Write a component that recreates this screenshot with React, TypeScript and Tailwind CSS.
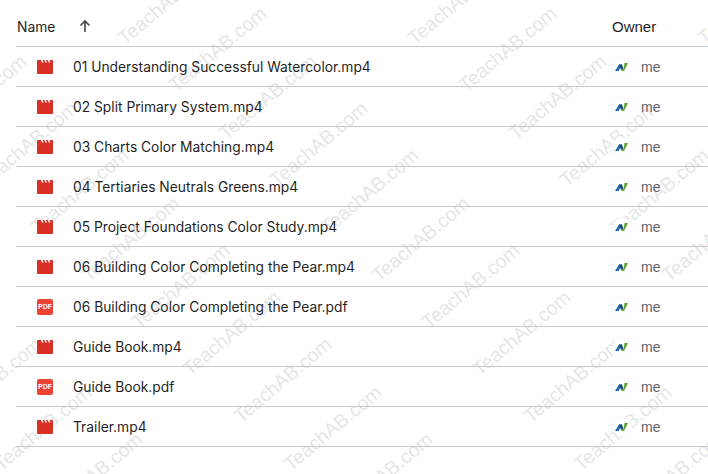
const files = [
  ["01 Understanding Successful Watercolor.mp4", "v"],
  ["02 Split Primary System.mp4", "v"],
  ["03 Charts Color Matching.mp4", "v"],
  ["04 Tertiaries Neutrals Greens.mp4", "v"],
  ["05 Project Foundations Color Study.mp4", "v"],
  ["06 Building Color Completing the Pear.mp4", "v"],
  ["06 Building Color Completing the Pear.pdf", "p"],
  ["Guide Book.mp4", "v"],
  ["Guide Book.pdf", "p"],
  ["Trailer.mp4", "v"],
];

function VideoIcon() {
  return (
    <svg width="16" height="14" viewBox="0 0 16 14" className="block">
      <path d="M0 1a1 1 0 0 1 1-1h14a1 1 0 0 1 1 1v12a1 1 0 0 1-1 1H1a1 1 0 0 1-1-1z" fill="#d93025" />
      <path d="M4 0h1.6l1 2.6H5zM7.4 0H9l1 2.6H8.4zM10.8 0h1.6l1 2.6h-1.6z" fill="#ffffff" />
    </svg>
  );
}

function PdfIcon() {
  return (
    <div className="w-4 h-4 rounded-[2px] bg-[#ea4335] flex items-center justify-center">
      <span className="text-white text-[7px] leading-none font-bold font-['Liberation_Sans',sans-serif]">PDF</span>
    </div>
  );
}

function Avatar() {
  return (
    <div className="w-5 h-5 rounded-full bg-white border border-[#f6f6f6] flex items-center justify-center">
      <svg width="13" height="8" viewBox="0 0 13 8" className="mr-px">
        <path d="M0 8 L4 1.5 L7 1.5 L3.5 8z" fill="#1a6fb0" />
        <path d="M4 1.5 L7 1.5 L8.5 6 L6 7z" fill="#17507a" />
        <path d="M6 7 L8.5 6 L9.5 0 L13 0 L9 8 L7 8z" fill="#5fa32e" />
      </svg>
    </div>
  );
}

const marks: [number, number][] = [];
for (const x0 of [-453, -163, 127, 417, 707]) {
  for (let i = -6; i < 16; i++) {
    marks.push([x0 + i * 50.7, 49 + i * 47.3]);
  }
}

export default function App() {
  return (
    <div className="relative w-[708px] h-[474px] overflow-hidden bg-white font-['Inter',sans-serif]">
      {marks.map(([x, y]) => (
        <span
          key={`${x}-${y}`}
          className="absolute whitespace-nowrap text-[19.5px] leading-none text-[#e6e6e6] origin-bottom-left pointer-events-none font-['Liberation_Sans',sans-serif]"
          style={{ left: x, top: y - 20, transform: "rotate(-40deg)" }}
        >
          TeachAB.com
        </span>
      ))}
      <div className="relative pl-4">
        <div className="h-[47px] pt-2 flex items-center border-b border-[#c7c7c7]">
          <span className="w-[62px] pl-px text-[13.8px] leading-5 text-[#1f1f1f]">Name</span>
          <svg width="14" height="14" viewBox="0 0 14 14" className="mb-0.5">
            <path d="M7 13V2M2.5 6.5 7 2l4.5 4.5" fill="none" stroke="#444746" strokeWidth="1.6" />
          </svg>
          <span className="ml-[520px] text-[15px] text-[#1f1f1f] font-['Liberation_Sans',sans-serif]">Owner</span>
        </div>
        {files.map(([name, kind]) => (
          <div key={name} className="h-10 flex items-center border-b border-[#c7c7c7]">
            <div className="w-4 ml-[21px] flex justify-center">
              {kind === "v" ? <VideoIcon /> : <PdfIcon />}
            </div>
            <span className="ml-5 w-[539px] text-[13.8px] leading-5 text-[#1f1f1f]">{name}</span>
            <Avatar />
            <span className="ml-[9px] text-sm text-[#5f6368] font-['Liberation_Sans',sans-serif]">me</span>
          </div>
        ))}
      </div>
    </div>
  );
}
